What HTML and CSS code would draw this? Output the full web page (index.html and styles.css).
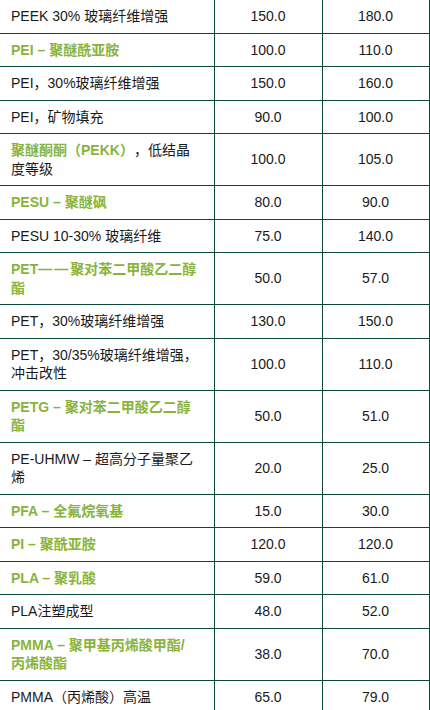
FILE: index.html
```html
<!DOCTYPE html>
<html lang="zh">
<head>
<meta charset="utf-8">
<title>材料温度表</title>
<link rel="stylesheet" href="styles.css">
</head>
<body>
<table class="data">
  <colgroup>
    <col class="col-name">
    <col class="col-a">
    <col class="col-b">
  </colgroup>
  <tbody>
    <tr><td class="name">PEEK 30% 玻璃纤维增强</td><td class="val">150.0</td><td class="val">180.0</td></tr>
    <tr><td class="name"><span class="hl">PEI – 聚醚酰亚胺</span></td><td class="val">100.0</td><td class="val">110.0</td></tr>
    <tr><td class="name">PEI，30%玻璃纤维增强</td><td class="val">150.0</td><td class="val">160.0</td></tr>
    <tr><td class="name">PEI，矿物填充</td><td class="val">90.0</td><td class="val">100.0</td></tr>
    <tr><td class="name"><span class="hl">聚醚酮酮（PEKK）</span>，低结晶度等级</td><td class="val">100.0</td><td class="val">105.0</td></tr>
    <tr><td class="name"><span class="hl">PESU – 聚醚砜</span></td><td class="val">80.0</td><td class="val">90.0</td></tr>
    <tr><td class="name">PESU 10-30% 玻璃纤维</td><td class="val">75.0</td><td class="val">140.0</td></tr>
    <tr><td class="name"><span class="hl">PET<span class="dash">——</span>聚对苯二甲酸乙二醇酯</span></td><td class="val">50.0</td><td class="val">57.0</td></tr>
    <tr><td class="name">PET，30%玻璃纤维增强</td><td class="val">130.0</td><td class="val">150.0</td></tr>
    <tr><td class="name">PET，30/35%玻璃纤维增强，冲击改性</td><td class="val">100.0</td><td class="val">110.0</td></tr>
    <tr><td class="name"><span class="hl">PETG – 聚对苯二甲酸乙二醇酯</span></td><td class="val">50.0</td><td class="val">51.0</td></tr>
    <tr><td class="name">PE-UHMW – 超高分子量聚乙烯</td><td class="val">20.0</td><td class="val">25.0</td></tr>
    <tr><td class="name"><span class="hl">PFA – 全氟烷氧基</span></td><td class="val">15.0</td><td class="val">30.0</td></tr>
    <tr><td class="name"><span class="hl">PI – 聚酰亚胺</span></td><td class="val">120.0</td><td class="val">120.0</td></tr>
    <tr><td class="name"><span class="hl">PLA – 聚乳酸</span></td><td class="val">59.0</td><td class="val">61.0</td></tr>
    <tr><td class="name">PLA注塑成型</td><td class="val">48.0</td><td class="val">52.0</td></tr>
    <tr><td class="name"><span class="hl">PMMA – 聚甲基丙烯酸甲酯/丙烯酸酯</span></td><td class="val">38.0</td><td class="val">70.0</td></tr>
    <tr><td class="name">PMMA（丙烯酸）高温</td><td class="val">65.0</td><td class="val">79.0</td></tr>
  </tbody>
</table>
</body>
</html>
```

FILE: styles.css
```css
html, body {
  margin: 0;
  padding: 0;
  background: #ffffff;
}

body {
  font-family: "Liberation Sans", "Noto Sans CJK SC", sans-serif;
  font-size: 14px;
  color: #1a1a1a;
  text-spacing-trim: space-all;
}

.data {
  width: 429px;
  border-collapse: collapse;
  table-layout: fixed;
  margin-top: -1px;
}

.col-name {
  width: 214px;
}

.col-a {
  width: 108px;
}

.col-b {
  width: 107px;
}

.data td {
  border-top: 1px solid #0b4a3a;
  border-bottom: 1px solid #0b4a3a;
  border-right: 1.5px solid #0b4a3a;
  padding: 7px 4px;
  line-height: 18.5px;
  vertical-align: middle;
}

.data td.name {
  padding-left: 11px;
  padding-right: 15.5px;
}

.data td.val {
  text-align: center;
}

.hl {
  color: #8ab33a;
  font-weight: 700;
}

.dash {
  letter-spacing: 2px;
}
```
